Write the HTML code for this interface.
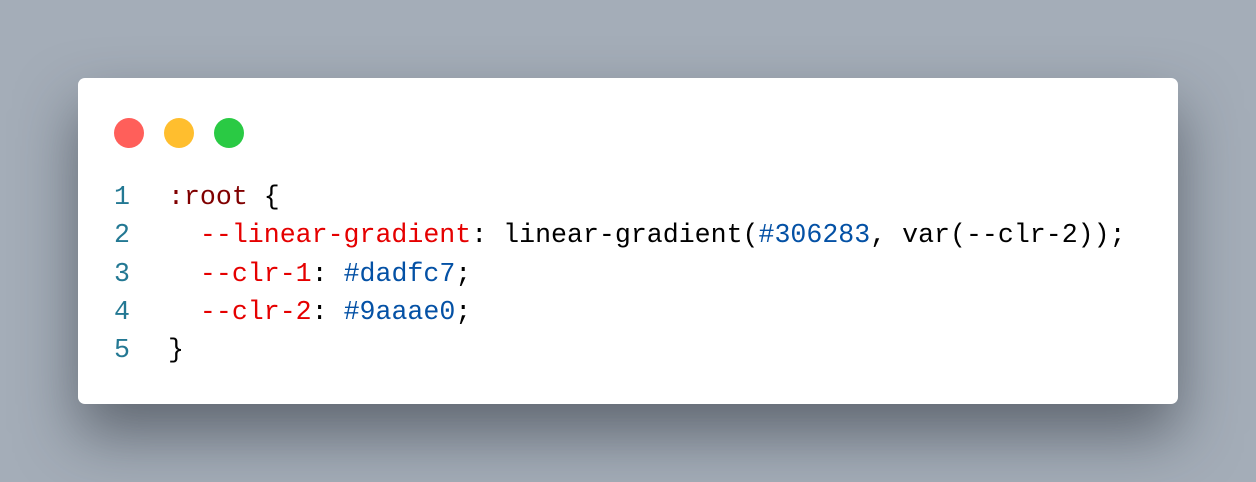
<!DOCTYPE html>
<html><head><style>
html,body{margin:0;padding:0;width:1256px;height:482px;overflow:hidden;background:#a4adb8;}
.card{position:absolute;left:78px;top:78px;width:1100px;height:326px;background:#fff;border-radius:7px;box-shadow:0 30px 60px rgba(40,45,55,0.55);}
.dot{position:absolute;top:40px;width:30px;height:30px;border-radius:50%;}
.code{position:absolute;left:0;top:100px;font-family:"Liberation Mono",monospace;font-size:26.6px;line-height:38.3px;}
.ln,.tx{white-space:pre;position:absolute;top:0;}
.ln{left:36px;color:#237893;}
.tx{left:90px;color:#000;}
.s{color:#800000}.p{color:#e50000}.v{color:#0451a5}
</style></head><body>
<div class="card">
<div class="dot" style="left:36px;background:#ff5f5a"></div>
<div class="dot" style="left:86px;background:#ffbe2e"></div>
<div class="dot" style="left:136px;background:#2aca44"></div>
<div class="code"><div class="ln">1
2
3
4
5</div><div class="tx"><span class="s">:root</span> {
  <span class="p">--linear-gradient</span>: linear-gradient(<span class="v">#306283</span>, var(--clr-2));
  <span class="p">--clr-1</span>: <span class="v">#dadfc7</span>;
  <span class="p">--clr-2</span>: <span class="v">#9aaae0</span>;
}</div></div>
</div>
</body></html>
